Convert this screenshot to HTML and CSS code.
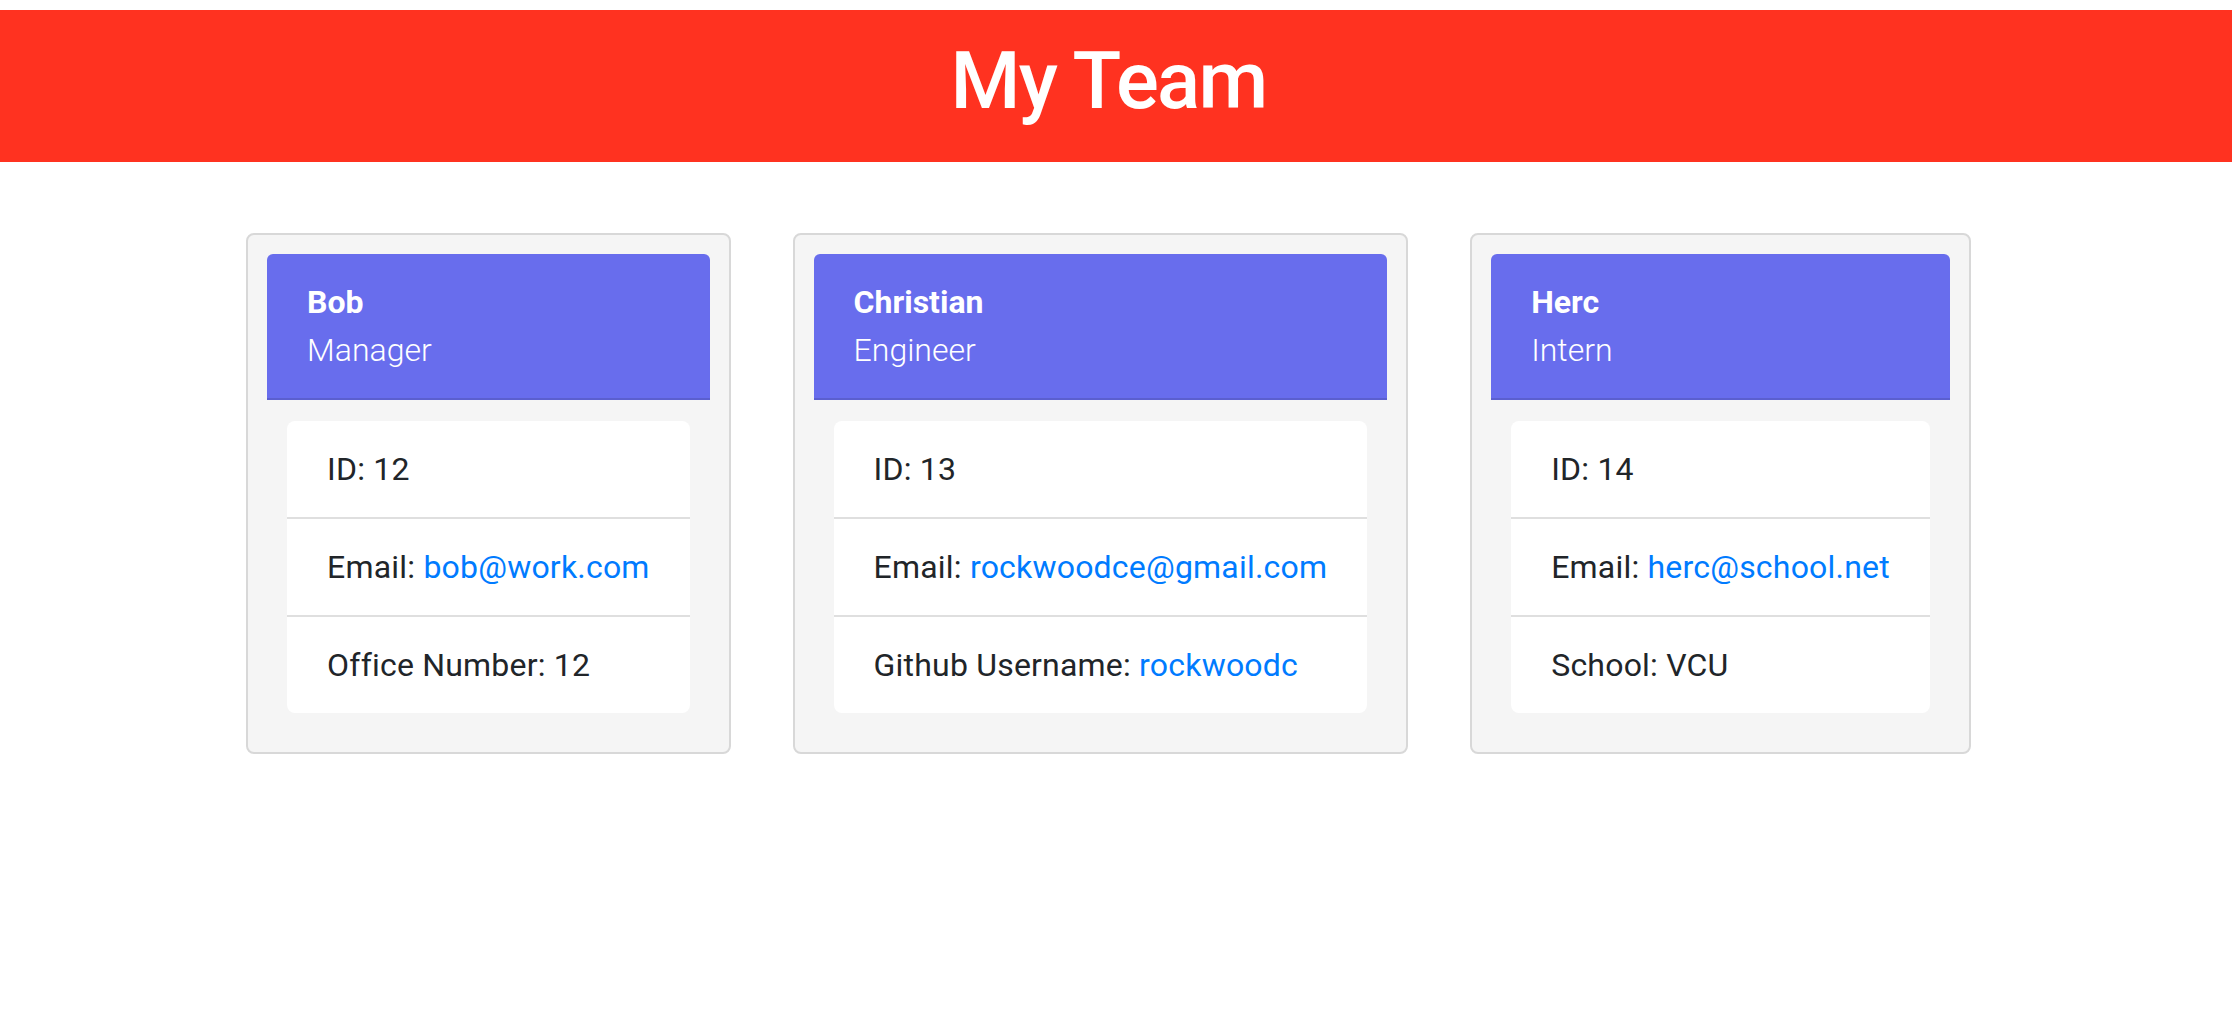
FILE: index.html
```html
<!DOCTYPE html>
<html lang="en">
<head>
<meta charset="utf-8">
<title>My Team</title>
<link rel="stylesheet" href="styles.css">
</head>
<body>
<header class="banner">
  <h1 class="banner-title">My Team</h1>
</header>
<main class="team">
  <article class="card">
    <div class="card-head">
      <h2 class="card-name">Bob</h2>
      <h3 class="card-role">Manager</h3>
    </div>
    <ul class="card-list">
      <li class="card-item">ID: 12</li>
      <li class="card-item">Email: <a class="card-link" href="mailto:bob@work.com">bob@work.com</a></li>
      <li class="card-item">Office Number: 12</li>
    </ul>
  </article>
  <article class="card">
    <div class="card-head">
      <h2 class="card-name">Christian</h2>
      <h3 class="card-role">Engineer</h3>
    </div>
    <ul class="card-list">
      <li class="card-item">ID: 13</li>
      <li class="card-item">Email: <a class="card-link" href="mailto:rockwoodce@gmail.com">rockwoodce@gmail.com</a></li>
      <li class="card-item">Github Username: <a class="card-link" href="#">rockwoodc</a></li>
    </ul>
  </article>
  <article class="card">
    <div class="card-head">
      <h2 class="card-name">Herc</h2>
      <h3 class="card-role">Intern</h3>
    </div>
    <ul class="card-list">
      <li class="card-item">ID: 14</li>
      <li class="card-item">Email: <a class="card-link" href="mailto:herc@school.net">herc@school.net</a></li>
      <li class="card-item">School: VCU</li>
    </ul>
  </article>
</main>
</body>
</html>
```
FILE: styles.css
```css
html, body {
  margin: 0;
  background: #ffffff;
}

body {
  padding-top: 10px;
  font-family: Roboto, "Liberation Sans", Arial, sans-serif;
  color: #212529;
}

.banner {
  background: #ff3220;
  text-align: center;
  padding: 23px 15px 33px 0;
}

.banner-title {
  margin: 0;
  font-size: 80px;
  line-height: 96px;
  font-weight: 500;
  color: #ffffff;
  letter-spacing: -1.7px;
}

.team {
  display: flex;
  justify-content: center;
  align-items: flex-start;
  gap: 62px;
  margin-top: 71px;
  padding-right: 15px;
}

.card {
  background: #f5f5f5;
  border: 2px solid #d8d8d8;
  border-radius: 8px;
  padding: 19px;
}

.card-head {
  background: #686ded;
  color: #ffffff;
  padding: 24px 40px;
  border-bottom: 2px solid #5b5fcf;
  border-radius: 6px 6px 0 0;
}

.card-name {
  margin: 0;
  font-size: 32px;
  line-height: 48px;
  font-weight: 700;
}

.card-role {
  margin: 0;
  font-size: 32px;
  line-height: 48px;
  font-weight: 300;
}

.card-list {
  list-style: none;
  margin: 21px 20px 20px;
  padding: 0;
  background: #ffffff;
  border-radius: 8px;
}

.card-item {
  padding: 24px 40px;
  font-size: 32px;
  line-height: 48px;
  letter-spacing: 0.2px;
  white-space: nowrap;
}

.card-item + .card-item {
  border-top: 2px solid #dfdfdf;
}

.card-link {
  color: #007bff;
  text-decoration: none;
}
```
